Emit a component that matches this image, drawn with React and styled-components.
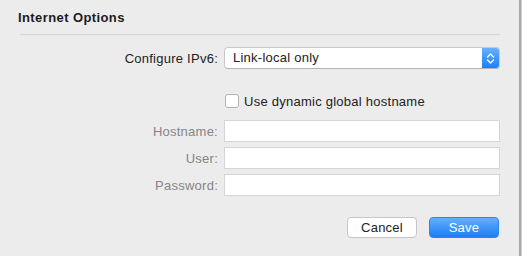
import React from 'react'
import styled, { createGlobalStyle } from 'styled-components'

const GlobalStyle = createGlobalStyle`
  html, body {
    margin: 0;
    padding: 0;
    background: #ececec;
  }
  body {
    font-family: "Liberation Sans", Arial, sans-serif;
    font-size: 13px;
    letter-spacing: 0.25px;
    color: #222;
  }
`;

const Window = styled.div`
  width: 522px;
  height: 256px;
  display: flex;
  overflow: hidden;
`;

const Panel = styled.div`
  width: 519px;
  display: flex;
  flex-direction: column;
  background: #ececec;
  border-right: 2px solid #a9a9a9;
`;

const Edge = styled.div`
  width: 1px;
  background: #cfcfcf;
`;

const Title = styled.div`
  padding: 10px 0 0 18px;
  font-weight: bold;
  font-size: 13px;
  line-height: 16px;
  letter-spacing: 0.4px;
  color: #1c1c1c;
`;

const Divider = styled.div`
  height: 1px;
  margin: 8px 19px 0 20px;
  background: #d6d6d6;
`;

const Form = styled.div`
  display: grid;
  grid-template-columns: 218px 276px;
  column-gap: 6px;
  margin-top: 12px;
`;

const Label = styled.div`
  text-align: right;
  align-self: center;
  color: ${p => (p.$dim ? '#858585' : '#222')};
  margin-top: ${p => p.$mt || 0}px;
`;

const Field = styled.div`
  height: ${p => p.$h || 22}px;
  margin-top: ${p => p.$mt || 0}px;
  display: flex;
  align-items: center;
`;

const Select = styled.div`
  flex: 1;
  height: 20px;
  display: flex;
  align-items: stretch;
  background: #fff;
  border: 1px solid #c9c9c9;
  border-bottom-color: #b3b3b3;
  border-radius: 4px;
  overflow: hidden;
`;

const SelectText = styled.div`
  flex: 1;
  padding-left: 8px;
  line-height: 20px;
  color: #222;
`;

const Stepper = styled.div`
  width: 17px;
  display: flex;
  align-items: center;
  justify-content: center;
  background: linear-gradient(#68b0fc, #1b7ff9);
`;

const Check = styled.div`
  width: 12px;
  height: 12px;
  border: 1px solid #b2b2b2;
  border-radius: 3px;
  background: #fff;
  margin-left: 1px;
`;

const CheckLabel = styled.span`
  margin-left: 5px;
  color: #222;
`;

const Input = styled.div`
  flex: 1;
  height: 20px;
  background: #fff;
  border: 1px solid #d5d5d5;
`;

const Buttons = styled.div`
  display: flex;
  justify-content: flex-end;
  gap: 12px;
  margin: 21px 20px 0 0;
`;

const Button = styled.div`
  width: 70px;
  height: 21px;
  box-sizing: border-box;
  border-radius: 4px;
  display: flex;
  align-items: center;
  justify-content: center;
  font-size: 13px;
  color: ${p => (p.$primary ? '#fff' : '#222')};
  background: ${p => (p.$primary ? 'linear-gradient(#67aefc, #1a7ef8)' : '#fff')};
  border: 1px solid ${p => (p.$primary ? '#2b84f5' : '#c6c6c6')};
`;

const Chevrons = () => (
  <svg width="9" height="13" viewBox="0 0 9 13">
    <path d="M1.5 5 L4.5 2 L7.5 5" fill="none" stroke="#fff" strokeWidth="1.3" strokeLinecap="round" strokeLinejoin="round" />
    <path d="M1.5 8 L4.5 11 L7.5 8" fill="none" stroke="#fff" strokeWidth="1.3" strokeLinecap="round" strokeLinejoin="round" />
  </svg>
)

export default function App() {
  return (
    <Window>
      <GlobalStyle />
      <Panel>
        <Title>Internet Options</Title>
        <Divider />
        <Form>
          <Label>Configure IPv6:</Label>
          <Field>
            <Select>
              <SelectText>Link-local only</SelectText>
              <Stepper><Chevrons /></Stepper>
            </Select>
          </Field>

          <div />
          <Field $mt={21}>
            <Check />
            <CheckLabel>Use dynamic global hostname</CheckLabel>
          </Field>

          <Label $dim $mt={8}>Hostname:</Label>
          <Field $mt={8}><Input /></Field>
          <Label $dim $mt={5}>User:</Label>
          <Field $mt={5}><Input /></Field>
          <Label $dim $mt={5}>Password:</Label>
          <Field $mt={5}><Input /></Field>
        </Form>
        <Buttons>
          <Button>Cancel</Button>
          <Button $primary>Save</Button>
        </Buttons>
      </Panel>
      <Edge />
    </Window>
  )
}
